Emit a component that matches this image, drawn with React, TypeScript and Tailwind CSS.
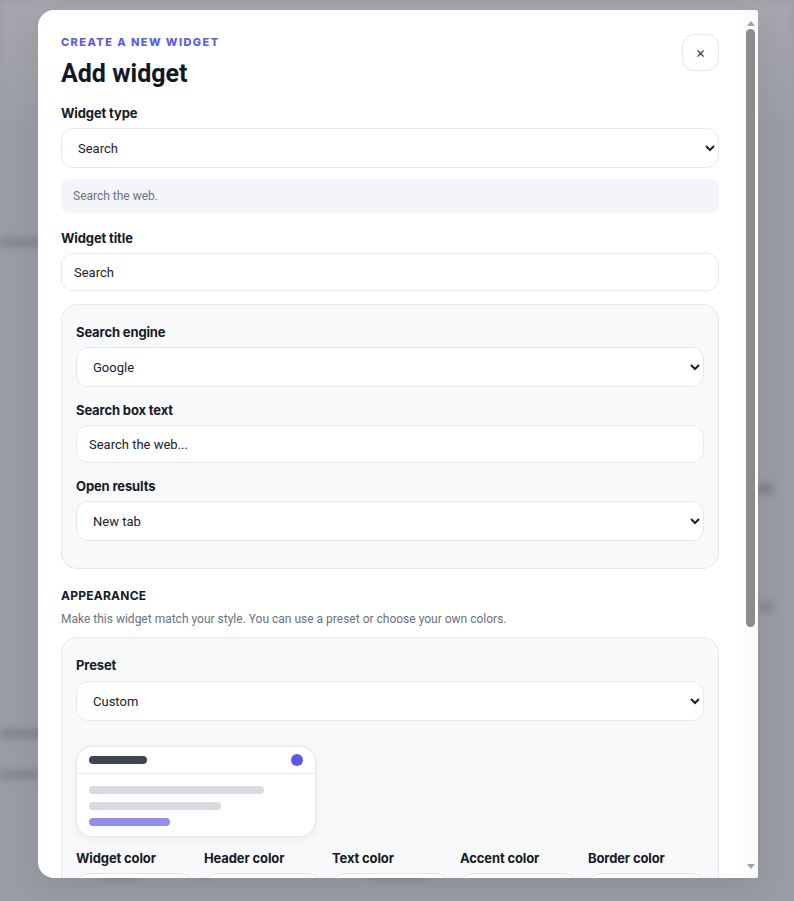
import React from "react";

const BODY = { fontFamily: 'Roboto, "Liberation Sans", sans-serif' };

const Label = ({ children, className = "" }: { children: React.ReactNode; className?: string }) => (
  <div className={`text-[13px] font-bold leading-5 tracking-[-0.01em] text-[#151a26] ${className}`}>{children}</div>
);

const Select = ({ value, className = "" }: { value: string; className?: string }) => (
  <select
    defaultValue={value}
    style={BODY}
    className={`block h-10 w-full rounded-xl border border-[#e6e8ec] bg-white pl-3 pr-0 text-[13px] text-[#1b2030] ${className}`}
  >
    <option>{value}</option>
  </select>
);

const Input = ({ value, className = "" }: { value: string; className?: string }) => (
  <input
    defaultValue={value}
    style={BODY}
    className={`block h-[38px] w-full rounded-xl border border-[#e6e8ec] bg-white px-3 text-[13px] text-[#1b2030] ${className}`}
  />
);

export default function App() {
  return (
    <div
      className="relative h-[901px] w-[794px] overflow-hidden bg-[#9a9ca4]"
      style={{ fontFamily: 'Inter, "Liberation Sans", sans-serif' }}
    >
      {/* blurred page behind */}
      <div className="absolute inset-0 flex flex-col blur-[4px]">
        <div className="h-[120px] bg-gradient-to-b from-[#a6a7ad] to-[#9c9ea5]" />
        <div className="mt-[120px] h-[5px] w-[40px] bg-[#6f727c]" />
        <div className="mt-[240px] flex justify-end pr-[20px]">
          <div className="h-[8px] w-[20px] rounded bg-[#767983]" />
        </div>
        <div className="mt-[110px] flex justify-end pr-[20px]">
          <div className="h-[8px] w-[16px] rounded bg-[#7d808a]" />
        </div>
        <div className="mt-[120px] h-[5px] w-[60px] bg-[#6d707a]" />
        <div className="mt-[36px] h-[5px] w-[40px] bg-[#70737d]" />
        <div className="mt-[92px] flex items-center gap-[60px] pl-[100px]">
          <div className="h-[8px] w-[40px] rounded bg-[#70737c]" />
          <div className="h-[8px] w-[8px] rounded bg-[#7a7d86]" />
          <div className="ml-[100px] h-[8px] w-[60px] rounded bg-[#70737c]" />
        </div>
      </div>

      {/* modal */}
      <div className="relative ml-[38px] mt-[10px] flex h-[868px] w-[720px] overflow-hidden rounded-l-2xl rounded-r-[3px] bg-white shadow-[0_10px_30px_rgba(0,0,0,0.08)]">
        <div className="min-w-0 flex-1 overflow-hidden pl-[23px] pr-6 pt-6">
          <div className="flex items-start justify-between">
            <div>
              <div className="text-[11px] font-extrabold leading-4 tracking-[0.13em] text-[#5b5fdc]">CREATE A NEW WIDGET</div>
              <h2 className="mt-2 text-[25px] font-bold leading-8 text-[#111726]" style={BODY}>
                Add widget
              </h2>
            </div>
            <button className="flex h-[37px] w-[37px] items-center justify-center rounded-xl border border-[#e5e7eb] bg-white text-[15px] leading-none text-[#374151]">
              ×
            </button>
          </div>

          <Label className="mt-[13px]">Widget type</Label>
          <Select value="Search" className="mt-[5px]" />
          <div
            className="mt-[11px] flex h-[34px] items-center rounded-lg bg-[#f4f5f9] px-3 text-[12px] text-[#6b7280]"
            style={BODY}
          >
            Search the web.
          </div>

          <Label className="mt-[15px]">Widget title</Label>
          <Input value="Search" className="mt-[5px]" />

          <div className="mt-[13px] rounded-2xl border border-[#e6e8ec] bg-[#f8f9fb] px-[14px] pb-[27px] pt-[17px]">
            <Label>Search engine</Label>
            <Select value="Google" className="mt-[5px]" />
            <Label className="mt-[13px]">Search box text</Label>
            <Input value="Search the web..." className="mt-[5px]" />
            <Label className="mt-[13px]">Open results</Label>
            <Select value="New tab" className="mt-[5px]" />
          </div>

          <div className="mt-[19px] text-[12px] font-bold leading-4 tracking-[0.02em] text-[#151a26]">APPEARANCE</div>
          <div className="mt-[7px] text-[12px] leading-4 text-[#6b7280]" style={BODY}>
            Make this widget match your style. You can use a preset or choose your own colors.
          </div>

          <div className="mt-[10px] rounded-2xl border border-[#e6e8ec] bg-[#f8f9fb] px-[14px] pb-[20px] pt-[17px]">
            <Label>Preset</Label>
            <Select value="Custom" className="mt-[6px]" />

            <div className="mt-[25px] w-[240px] rounded-2xl border border-[#e5e7eb] bg-white shadow-[0_2px_8px_rgba(17,24,39,0.06)]">
              <div className="flex h-[27px] items-center justify-between border-b border-[#e8e9ee] px-3">
                <div className="h-[8px] w-[58px] rounded-full bg-[#3f4452]" />
                <div className="h-[12px] w-[12px] rounded-full bg-[#5b57ea]" />
              </div>
              <div className="flex flex-col gap-2 px-3 pb-[10px] pt-3">
                <div className="h-[8px] w-[175px] rounded-full bg-[#d9dadf]" />
                <div className="h-[8px] w-[132px] rounded-full bg-[#d9dadf]" />
                <div className="h-[8px] w-[81px] rounded-full bg-[#918ef0]" />
              </div>
            </div>

            <div className="mt-[11px] grid grid-cols-5 gap-3">
              {["Widget color", "Header color", "Text color", "Accent color", "Border color"].map((t) => (
                <div key={t}>
                  <Label>{t}</Label>
                  <div className="mt-[5px] h-10 rounded-xl border border-[#e4e6eb] bg-white" />
                </div>
              ))}
            </div>
          </div>
        </div>

        {/* scrollbar */}
        <div className="flex w-[15px] flex-col items-center bg-[#fbfbfb]">
          <div className="flex h-[18px] w-full items-end justify-center pb-[2px]">
            <div className="h-0 w-0 border-x-[4px] border-b-[5px] border-x-transparent border-b-[#a3a3a3]" />
          </div>
          <div className="mt-[1px] h-[598px] w-[9px] rounded-full bg-[#8b8b8b]" />
          <div className="flex-1" />
          <div className="flex h-[16px] w-full items-start justify-center pt-[2px]">
            <div className="h-0 w-0 border-x-[4px] border-t-[5px] border-x-transparent border-t-[#a3a3a3]" />
          </div>
        </div>
      </div>
    </div>
  );
}
